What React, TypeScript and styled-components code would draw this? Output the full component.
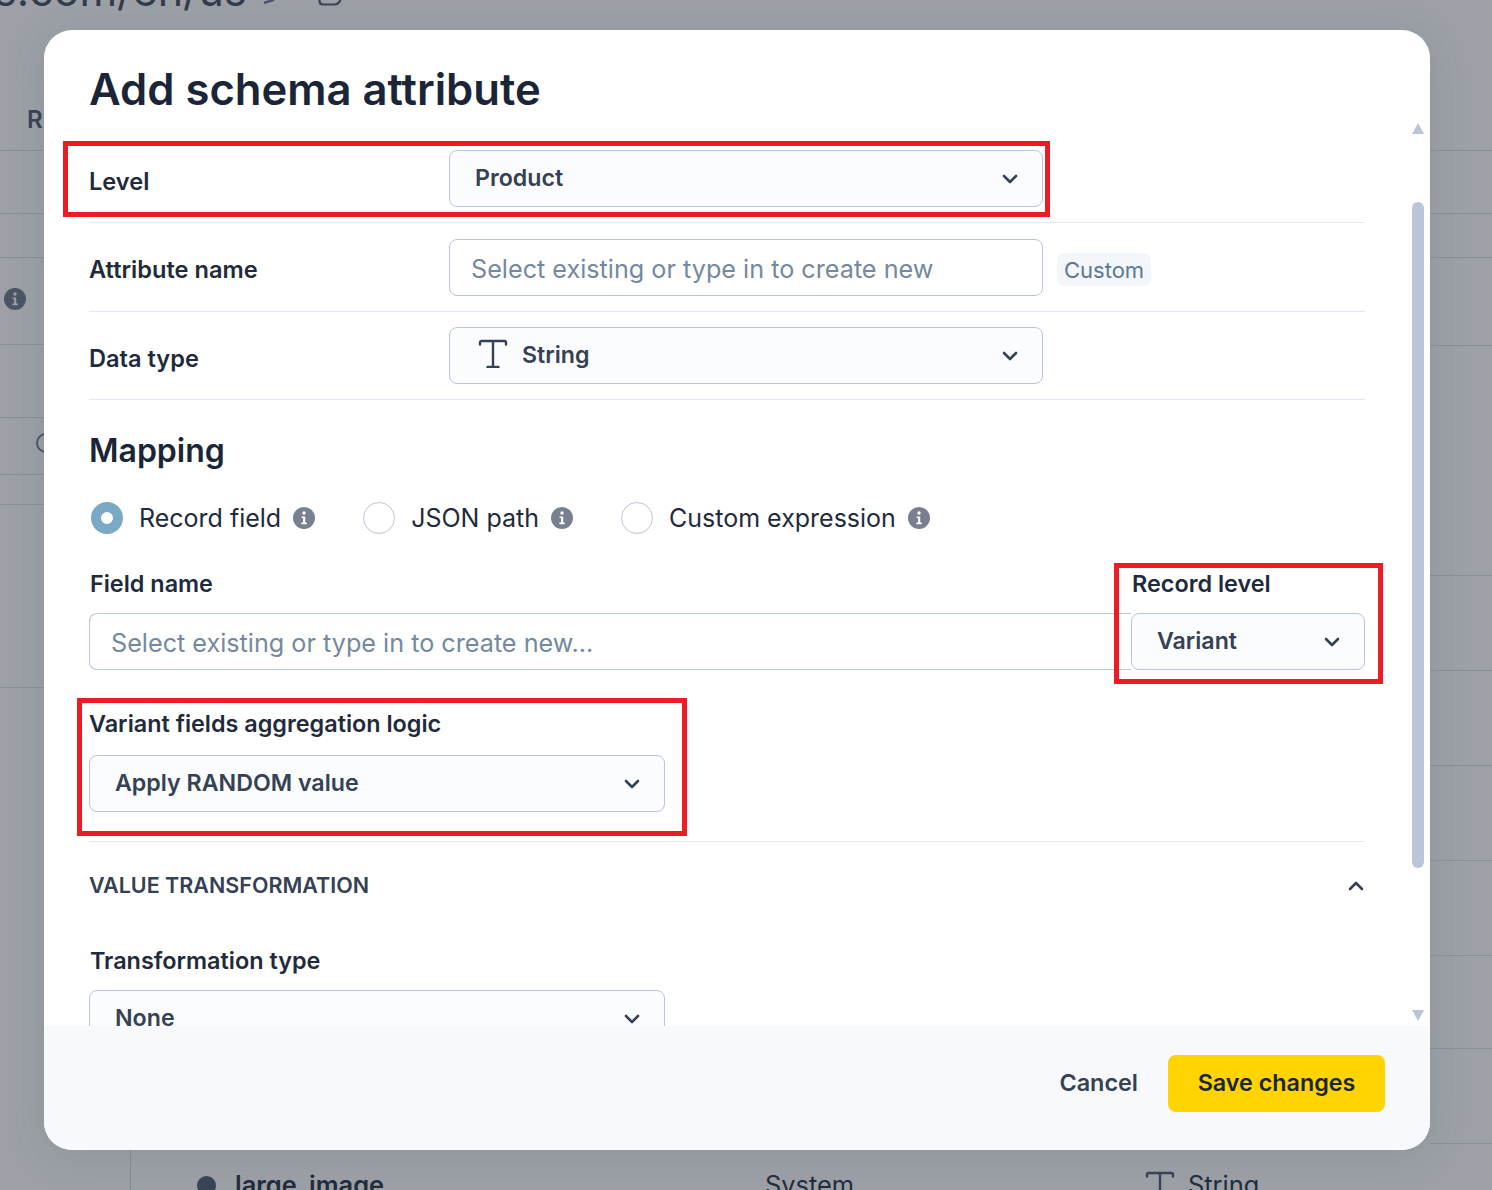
import React from 'react';
import styled, { createGlobalStyle } from 'styled-components';

const GlobalStyle = createGlobalStyle`
  html, body {
    margin: 0;
    padding: 0;
    background: #9da1a7;
    font-family: 'Inter', 'Liberation Sans', sans-serif;
  }
  * {
    box-sizing: border-box;
  }
`;

const Page = styled.div`
  position: relative;
  width: 1492px;
  height: 1190px;
  overflow: hidden;
  background: #9da1a7;
  color: #1a2638;
`;

/* page behind the dialog */
const BackUrl = styled.div`
  position: absolute;
  left: -6px;
  top: -36px;
  font-size: 43px;
  line-height: 52px;
  color: #333c4b;
`;

const BackToolIcon = styled.span<{ $left: number }>`
  position: absolute;
  left: ${p => p.$left}px;
  top: -20px;
  display: flex;
`;

const BackLetter = styled.div`
  position: absolute;
  left: 27px;
  top: 106px;
  font-size: 24px;
  line-height: 28px;
  font-weight: 600;
  color: #3a4453;
`;

const BackLine = styled.div<{ $top: number; $left: number; $width: number }>`
  position: absolute;
  top: ${p => p.$top}px;
  left: ${p => p.$left}px;
  width: ${p => p.$width}px;
  height: 1px;
  background: #8a909b;
`;

const BackDivider = styled.div`
  position: absolute;
  left: 130px;
  top: 1150px;
  width: 1px;
  height: 40px;
  background: #838a95;
`;

const BackInfo = styled.span`
  position: absolute;
  left: 4px;
  top: 288px;
  display: flex;
`;

const BackRing = styled.span`
  position: absolute;
  left: 36px;
  top: 433px;
  width: 20px;
  height: 20px;
  border-radius: 50%;
  border: 2px solid #4b5566;
`;

const BackRow = styled.div`
  position: absolute;
  left: 197px;
  top: 1170px;
  display: flex;
  align-items: center;
  font-size: 25.4px;
  line-height: 28px;
  color: #232d3c;
`;

const BackDot = styled.span`
  width: 19px;
  height: 19px;
  border-radius: 50%;
  background: #3a4558;
  margin-right: 19px;
`;

const BackName = styled.span`
  font-weight: 600;
  width: 530px;
`;

const BackCell = styled.span`
  width: 380px;
`;

const BackType = styled.span`
  display: flex;
  align-items: center;
  gap: 13px;
`;

const Modal = styled.div`
  position: absolute;
  left: 44px;
  top: 30px;
  width: 1386px;
  height: 1120px;
  background: #fff;
  border-radius: 28px;
  overflow: hidden;
  display: flex;
  flex-direction: column;
  box-shadow: 0 6px 40px rgba(60, 70, 85, 0.14);
`;

const Body = styled.div`
  flex: 1;
  min-height: 0;
  overflow: hidden;
  padding: 0 65px 0 45px;
`;

const Title = styled.h1`
  margin: 33px 0 0;
  font-size: 43.6px;
  line-height: 54px;
  font-weight: 600;
  color: #1a2638;
`;

const Row = styled.div<{ $pad: number }>`
  display: flex;
  align-items: flex-start;
  padding-top: ${p => p.$pad}px;
  padding-bottom: 15px;
  border-bottom: 1px solid #e4e8f0;
`;

const RowLabel = styled.label<{ $top: number }>`
  width: 360px;
  padding-top: ${p => p.$top}px;
  font-size: 23.6px;
  line-height: 30px;
  font-weight: 600;
  color: #1f2b3d;
`;

const Control = styled.div<{ $width: number; $filled?: boolean }>`
  width: ${p => p.$width}px;
  height: 57px;
  flex: none;
  display: flex;
  align-items: center;
  border: 1px solid #b9c5d9;
  border-radius: 8px;
  padding: 0 22px 0 ${p => (p.$filled ? 25 : 21)}px;
  background: ${p => (p.$filled ? '#fbfcfe' : '#fff')};
`;

const Value = styled.span`
  flex: 1;
  font-size: 23.2px;
  line-height: 30px;
  font-weight: 600;
  color: #354154;
  padding-bottom: 1px;
`;

const TypeIcon = styled.span`
  display: flex;
  margin: 0 14px 6px 3px;
`;

const Placeholder = styled.span`
  flex: 1;
  font-size: 25.2px;
  line-height: 30px;
  color: #7489a0;
  white-space: nowrap;
  padding-top: 2px;
`;

const Tag = styled.span`
  margin: 14px 0 0 14px;
  height: 33px;
  padding: 0 7px;
  display: flex;
  align-items: center;
  border-radius: 7px;
  background: #f3f6fa;
  font-size: 22px;
  color: #5b7895;
`;

const Heading = styled.h2`
  margin: 30px 0 0;
  font-size: 32px;
  line-height: 42px;
  font-weight: 600;
  color: #1a2638;
`;

const RadioRow = styled.div`
  display: flex;
  align-items: center;
  margin-top: 28px;
  padding-left: 2px;
  height: 36px;
`;

const RadioItem = styled.div<{ $gap: number }>`
  display: flex;
  align-items: center;
  margin-right: ${p => p.$gap}px;
`;

const Radio = styled.span<{ $checked?: boolean }>`
  width: 32px;
  height: 32px;
  border-radius: 50%;
  flex: none;
  background: #fff;
  border: ${p => (p.$checked ? '10px solid #7aa9c6' : '1px solid #b9c5d9')};
  margin-right: 16px;
`;

const RadioLabel = styled.span`
  font-size: 25px;
  line-height: 30px;
  color: #1f2b3d;
  margin-right: 12px;
`;

const FieldRow = styled.div`
  display: flex;
  margin-top: 33px;
`;

const FieldColumn = styled.div<{ $grow?: boolean }>`
  display: flex;
  flex-direction: column;
  flex: ${p => (p.$grow ? 1 : 'none')};
`;

const FieldLabel = styled.label<{ $indent?: number; $gap?: number }>`
  display: block;
  font-size: 23.4px;
  line-height: 30px;
  font-weight: 600;
  color: #1f2b3d;
  padding-left: ${p => p.$indent ?? 1}px;
  margin-bottom: ${p => p.$gap ?? 14}px;
`;

const WideInput = styled.div`
  height: 57px;
  display: flex;
  align-items: center;
  border: 1px solid #b9c5d9;
  border-right: none;
  border-radius: 8px 0 0 8px;
  padding-left: 21px;
`;

const Section = styled.div`
  margin-top: 39px;
`;

const Collapse = styled.div`
  margin-top: 29px;
  border-top: 1px solid #e4e8f0;
  display: flex;
  align-items: flex-start;
  justify-content: space-between;
  padding-top: 28px;
  height: 90px;
`;

const CollapseTitle = styled.span`
  font-size: 21.5px;
  line-height: 30px;
  font-weight: 600;
  color: #354154;
`;

const CollapseIcon = styled.span`
  display: flex;
  margin: 6px -1px 0 0;
`;

const TransformBlock = styled.div`
  margin-top: 15px;
`;

const Footer = styled.div`
  flex: none;
  height: 124px;
  background: #f8f9fd;
  display: flex;
  align-items: center;
  justify-content: flex-end;
  padding: 0 45px 10px 0;
  position: relative;
`;

const CancelButton = styled.button`
  border: none;
  background: none;
  padding: 0;
  margin-right: 30px;
  font: 600 23.4px/30px 'Inter', 'Liberation Sans', sans-serif;
  color: #354154;
`;

const SaveButton = styled.button`
  width: 217px;
  height: 57px;
  border: none;
  border-radius: 8px;
  background: #ffd400;
  font: 600 23.3px/30px 'Inter', 'Liberation Sans', sans-serif;
  color: #1a2638;
`;

/* scrollbar sits over the dialog edge */
const ScrollArrow = styled.span<{ $top: number; $down?: boolean }>`
  position: absolute;
  left: 1412px;
  top: ${p => p.$top}px;
  width: 12px;
  height: 11px;
  background: #b9c5d9;
  clip-path: ${p => (p.$down ? 'polygon(0 0, 100% 0, 50% 100%)' : 'polygon(50% 0, 100% 100%, 0 100%)')};
`;

const ScrollThumb = styled.span`
  position: absolute;
  left: 1412px;
  top: 202px;
  width: 12px;
  height: 666px;
  border-radius: 6px;
  background: #b9c5d9;
`;

const Highlight = styled.div<{ $x: number; $y: number; $w: number; $h: number }>`
  position: absolute;
  left: ${p => p.$x}px;
  top: ${p => p.$y}px;
  width: ${p => p.$w}px;
  height: ${p => p.$h}px;
  border: 5px solid #ed1c24;
  pointer-events: none;
`;

function Chevron({ up = false }: { up?: boolean }) {
  return (
    <svg width="20" height="20" viewBox="0 0 20 20" fill="none">
      <path
        d={up ? 'M4 13l6-6 6 6' : 'M4 7l6 6 6-6'}
        stroke="#354154"
        strokeWidth="2.6"
        strokeLinecap="round"
        strokeLinejoin="round"
      />
    </svg>
  );
}

function InfoDot({ size = 22, fill = '#78808f', mark = '#fff' }: { size?: number; fill?: string; mark?: string }) {
  return (
    <svg width={size} height={size} viewBox="0 0 22 22">
      <circle cx="11" cy="11" r="11" fill={fill} />
      <circle cx="11" cy="6" r="1.7" fill={mark} />
      <path d="M8.6 9.4h3.6v6.2h1.6v1.6H8.4v-1.6h1.7v-4.6H8.6z" fill={mark} />
    </svg>
  );
}

function StringIcon({ color = '#354154', size = 30 }: { color?: string; size?: number }) {
  return (
    <svg width={size} height={size} viewBox="0 0 30 30" fill="none">
      <path
        d="M2 6.5V4.6C2 3.7 2.7 3 3.6 3h22.8c.9 0 1.6.7 1.6 1.6v1.9M15 3v26M9.5 29h11"
        stroke={color}
        strokeWidth="2.4"
        strokeLinecap="round"
      />
    </svg>
  );
}

export default function App() {
  return (
    <Page>
      <GlobalStyle />

      <BackUrl>s.com/en/us</BackUrl>
      <BackToolIcon $left={262}>
        <svg width="14" height="24" viewBox="0 0 14 24" fill="none">
          <path d="M2 23l9-3 2-18" stroke="#4b5566" strokeWidth="2.4" />
        </svg>
      </BackToolIcon>
      <BackToolIcon $left={318}>
        <svg width="24" height="26" viewBox="0 0 24 26" fill="none">
          <path d="M1.5 2v19c0 2 1.5 3.5 3.5 3.5h11c4 0 6.5-3 6.5-6V2" stroke="#3a4453" strokeWidth="2.2" />
        </svg>
      </BackToolIcon>
      <BackLetter>R</BackLetter>
      {[150, 213, 257, 344, 417, 474, 504, 687].map(y => (
        <BackLine key={y} $top={y} $left={0} $width={44} />
      ))}
      {[150, 213, 257, 345, 575, 670, 765, 860, 955, 1048, 1143].map(y => (
        <BackLine key={y} $top={y} $left={1430} $width={62} />
      ))}
      <BackInfo>
        <InfoDot fill="#4b5566" mark="#9da1a7" />
      </BackInfo>
      <BackRing />
      <BackDivider />
      <BackRow>
        <BackDot />
        <BackName>large_image</BackName>
        <BackCell>System</BackCell>
        <BackType>
          <StringIcon color="#3a4453" />
          String
        </BackType>
      </BackRow>

      <Modal>
        <Body>
          <Title>Add schema attribute</Title>

          <Row $pad={33}>
            <RowLabel $top={17}>Level</RowLabel>
            <Control $width={594} $filled>
              <Value>Product</Value>
              <Chevron />
            </Control>
          </Row>
          <Row $pad={16}>
            <RowLabel $top={16}>Attribute name</RowLabel>
            <Control $width={594}>
              <Placeholder>Select existing or type in to create new</Placeholder>
            </Control>
            <Tag>Custom</Tag>
          </Row>
          <Row $pad={15}>
            <RowLabel $top={17}>Data type</RowLabel>
            <Control $width={594} $filled>
              <TypeIcon>
                <StringIcon />
              </TypeIcon>
              <Value>String</Value>
              <Chevron />
            </Control>
          </Row>

          <Heading>Mapping</Heading>

          <RadioRow>
            <RadioItem $gap={48}>
              <Radio $checked />
              <RadioLabel>Record field</RadioLabel>
              <InfoDot />
            </RadioItem>
            <RadioItem $gap={48}>
              <Radio />
              <RadioLabel>JSON path</RadioLabel>
              <InfoDot />
            </RadioItem>
            <RadioItem $gap={0}>
              <Radio />
              <RadioLabel>Custom expression</RadioLabel>
              <InfoDot />
            </RadioItem>
          </RadioRow>

          <FieldRow>
            <FieldColumn $grow>
              <FieldLabel $gap={14}>Field name</FieldLabel>
              <WideInput>
                <Placeholder>Select existing or type in to create new...</Placeholder>
              </WideInput>
            </FieldColumn>
            <FieldColumn>
              <FieldLabel $gap={14}>Record level</FieldLabel>
              <Control $width={234} $filled>
                <Value>Variant</Value>
                <Chevron />
              </Control>
            </FieldColumn>
          </FieldRow>

          <Section>
            <FieldLabel as="div" $indent={0} $gap={16}>Variant fields aggregation logic</FieldLabel>
            <Control $width={576} $filled>
              <Value>Apply RANDOM value</Value>
              <Chevron />
            </Control>
          </Section>

          <Collapse>
            <CollapseTitle>VALUE TRANSFORMATION</CollapseTitle>
            <CollapseIcon>
              <Chevron up />
            </CollapseIcon>
          </Collapse>

          <TransformBlock>
            <FieldLabel as="div">Transformation type</FieldLabel>
            <Control $width={576} $filled>
              <Value>None</Value>
              <Chevron />
            </Control>
          </TransformBlock>
        </Body>

        <Footer>
          <CancelButton>Cancel</CancelButton>
          <SaveButton>Save changes</SaveButton>
        </Footer>
      </Modal>

      <ScrollArrow $top={123} />
      <ScrollThumb />
      <ScrollArrow $top={1010} $down />

      <Highlight $x={63} $y={141} $w={987} $h={76} />
      <Highlight $x={1114} $y={563} $w={269} $h={121} />
      <Highlight $x={77} $y={698} $w={610} $h={138} />
    </Page>
  );
}
